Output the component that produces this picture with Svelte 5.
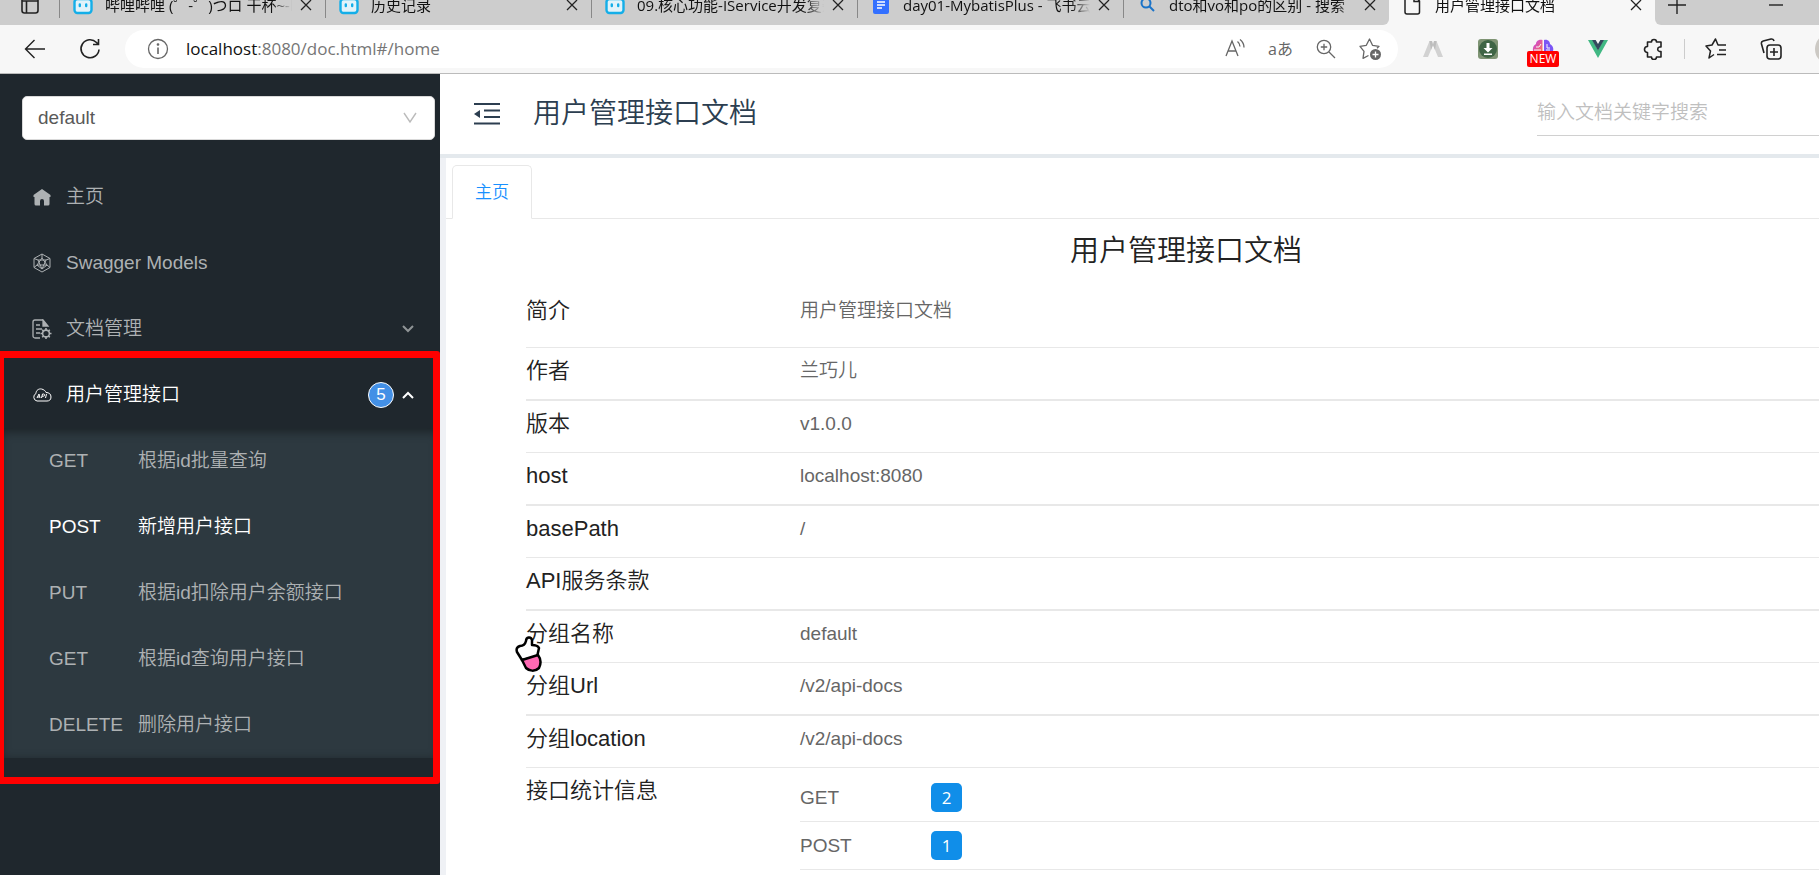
<script lang="ts">
    const tabs = [
        {icon: 'bili', title: '哔哩哔哩 (゜-゜)つロ 干杯~-bilibili'},
        {icon: 'bili', title: '历史记录'},
        {icon: 'bili', title: '09.核心功能-IService开发复杂业务'},
        {icon: 'doc', title: 'day01-MybatisPlus - 飞书云文档'},
        {icon: 'search', title: 'dto和vo和po的区别 - 搜索'},
        {icon: 'page', title: '用户管理接口文档', active: true},
    ];

    const apis = [
        {method: 'GET', name: '根据id批量查询'},
        {method: 'POST', name: '新增用户接口', active: true},
        {method: 'PUT', name: '根据id扣除用户余额接口'},
        {method: 'GET', name: '根据id查询用户接口'},
        {method: 'DELETE', name: '删除用户接口'},
    ];

    const info = [
        ['简介', '用户管理接口文档'],
        ['作者', '兰巧儿'],
        ['版本', 'v1.0.0'],
        ['host', 'localhost:8080'],
        ['basePath', '/'],
        ['API服务条款', ''],
        ['分组名称', 'default'],
        ['分组Url', '/v2/api-docs'],
        ['分组location', '/v2/api-docs'],
    ];

    const stats = [
        ['GET', 2],
        ['POST', 1],
    ];
</script>

<div class="window">
    <div class="tabbar">
        <button class="tab-menu" aria-label="Tab actions">
            <svg width="18" height="18" viewBox="0 0 18 18" fill="none" stroke="#222" stroke-width="1.6"><rect x="1" y="1" width="16" height="16" rx="2.5"/><path d="M1 5h16M5.500 5v12"/></svg>
        </button>
        {#each tabs as tab}
            <div class="tab" class:active={tab.active}>
                <span class="favicon">
                    {#if tab.icon === 'bili'}
                        <svg width="20" height="20" viewBox="0 0 20 20" fill="none" stroke="#14aee8" stroke-width="2.4" stroke-linecap="round"><path d="M5 1l2 3M15 1l-2 3"/><rect x="1.500" y="4" width="17" height="14" rx="3" fill="#e2f3fa"/><path d="M6.800 9.500v1.500M13.200 9.500v1.500"/></svg>
                    {:else if tab.icon === 'doc'}
                        <svg width="20" height="20" viewBox="0 0 20 20"><path d="M4 0h10l4 4v13a2 2 0 0 1-2 2H4a2 2 0 0 1-2-2V2a2 2 0 0 1 2-2z" fill="#3370ff"/><path d="M6 7h8M6 10h8M6 13h5" stroke="#fff" stroke-width="1.400"/></svg>
                    {:else if tab.icon === 'search'}
                        <svg width="20" height="20" viewBox="0 0 20 20" fill="none" stroke="#1a73c8" stroke-width="2"><circle cx="9" cy="8" r="4.500"/><path d="M12.500 11.500l4.500 4.500"/></svg>
                    {:else}
                        <svg width="20" height="20" viewBox="0 0 20 20" fill="none" stroke="#222" stroke-width="1.500"><path d="M4 1h7.500l5 5v11a2 2 0 0 1-2 2H4a2 2 0 0 1-2-2V3a2 2 0 0 1 2-2zM11 1v5.500h5.500"/></svg>
                    {/if}
                </span>
                <span class="tab-title">{tab.title}</span>
                <button class="close" aria-label="Close tab">
                    <svg width="12" height="12" viewBox="0 0 12 12" stroke="#222" stroke-width="1.300"><path d="M1 1l10 10M11 1L1 11"/></svg>
                </button>
            </div>
        {/each}
        <div class="tab-end">
            <button aria-label="New tab"><svg width="18" height="18" viewBox="0 0 18 18" stroke="#222" stroke-width="1.400"><path d="M0 9h18M9 0v18"/></svg></button>
            <button aria-label="Minimize"><svg width="14" height="14" viewBox="0 0 14 14" stroke="#222" stroke-width="1.400"><path d="M0 7h14"/></svg></button>
        </div>
    </div>

    <div class="toolbar">
        <button aria-label="Back"><svg width="22" height="22" viewBox="0 0 22 22" fill="none" stroke="#222" stroke-width="1.400"><path d="M21 11H2M10.500 2L1.500 11l9 9"/></svg></button>
        <button aria-label="Refresh"><svg width="22" height="22" viewBox="0 0 22 22" fill="none" stroke="#222" stroke-width="1.600"><path d="M20 11.500a9 9 0 1 1-2.500-7L19 6M19.500 1v5.500H14"/></svg></button>
        <div class="address">
            <svg width="22" height="22" viewBox="0 0 22 22" fill="none" stroke="#666" stroke-width="1.300"><circle cx="11" cy="11" r="9.500"/><path d="M11 9.500v6.500" stroke-width="1.600"/><circle cx="11" cy="6.500" r=".7" fill="#666"/></svg>
            <span class="url"><b>localhost</b>:8080/doc.html#/home</span>
            <button aria-label="Read aloud"><svg width="22" height="22" viewBox="0 0 22 22" fill="none" stroke="#666" stroke-width="1.300"><path d="M2 18L8 3l6 15M4 13h8M13.500 3.500c1.500 1.200 2.500 2.500 2.500 5M16 1.500c2.500 2 4 4 4 8"/></svg></button>
            <button class="translate" aria-label="Translate">aあ</button>
            <button aria-label="Zoom"><svg width="22" height="22" viewBox="0 0 22 22" fill="none" stroke="#666" stroke-width="1.300"><circle cx="9" cy="9" r="6.700"/><path d="M14 14l6 6M9 5.800v6.400M5.800 9h6.400"/></svg></button>
            <button aria-label="Add to favorites"><svg width="22" height="22" viewBox="0 0 22 22" fill="none" stroke="#666" stroke-width="1.300" stroke-linejoin="round"><path d="M9.500 17.500l-5.500 2.800 1-7L1 8.300l6.300-1L10.500 1l3 6.300 6.500 1-2 2"/><circle cx="16.500" cy="16.500" r="5.500" fill="#666" stroke="none"/><path d="M16.500 13.500v6M13.500 16.500h6" stroke="#fff"/></svg></button>
        </div>
        <div class="extensions">
            <button aria-label="Extension"><svg width="22" height="22" viewBox="0 0 22 22"><path d="M1 19L7.500 3h2.500l1 4-5 12zM21 19L14.500 3H12l-1 4 5 12z" fill="#d2d2d2"/><path d="M7.500 3H10l1 4-2 5zM14.500 3H12l-1 4 2 5z" fill="#bdbdbd"/></svg></button>
            <button aria-label="Download"><svg width="22" height="22" viewBox="0 0 22 22"><rect x="1" y="1" width="20" height="20" rx="3" fill="#7f9474"/><circle cx="11" cy="11" r="9" fill="#3f6545"/><path d="M9.500 5h3v5h3L11 14.500 6.500 10h3zM7 15.500h8V17H7z" fill="#fff"/></svg></button>
            <button class="brain" aria-label="Assistant">
                <svg width="22" height="22" viewBox="0 0 22 22">
                    <defs>
                        <linearGradient id="lobe" x2="1" y2="1"><stop offset="0" stop-color="#c13cf0"/><stop offset="1" stop-color="#ff7a4d"/></linearGradient>
                    </defs>
                    <path d="M10.500 2C6 1 4 4 4 6 0 8 0 14 3 15h7.500z" fill="url(#lobe)"/><path d="M12 2c4-1 6 2 6 4 4 2 4 7 2 9h-8z" fill="#7b55f5"/><path d="M4 9h3l2-3M18 10h-3V6M2 12h7M14 12h4" fill="none" stroke="#f7f7f7"/>
                </svg>
                <span>NEW</span>
            </button>
            <button aria-label="Vue devtools"><svg width="22" height="22" viewBox="0 0 22 22"><path d="M1 2h4.500L11 12l5.500-10H21L11 20z" fill="#41b883"/><path d="M5 2h3.700L11 6l2.300-4H17L11 12.500z" fill="#35495e"/></svg></button>
            <button aria-label="Extensions"><svg width="22" height="22" viewBox="0 0 22 22" fill="none" stroke="#222" stroke-width="1.600" stroke-linejoin="round"><path d="M5.500 4h4a2.500 2.500 0 0 1 5 0H19v5h-1.500a2.300 2.300 0 0 0 0 4.500H19V19h-4.500a2.500 2.500 0 0 1-5 0h-4v-4.500a2.700 2.700 0 0 1 0-6z"/></svg></button>
            <span class="divider"></span>
            <button aria-label="Favorites"><svg width="22" height="22" viewBox="0 0 22 22" fill="none" stroke="#222" stroke-width="1.500" stroke-linejoin="round"><path d="M9 16.500L4 20l1.500-7L1 8l6-1 3.500-6L13 7h8M14 12h7M12 16.500h9"/></svg></button>
            <button aria-label="Collections"><svg width="22" height="22" viewBox="0 0 22 22" fill="none" stroke="#222" stroke-width="1.600"><path d="M4 15L1.500 6a2.500 2.500 0 0 1 1.700-3L11 1a2.500 2.500 0 0 1 3 2"/><rect x="7" y="7" width="14" height="14" rx="3"/><path d="M14 10v8M10 14h8"/></svg></button>
            <span class="avatar"></span>
        </div>
    </div>

    <div class="app">
        <aside>
            <div class="select">
                <select aria-label="分组">
                    <option>default</option>
                </select>
                <svg width="14" height="12" viewBox="0 0 14 12" fill="none" stroke="#bbb" stroke-width="1.400"><path d="M1 1l6 9 6-9"/></svg>
            </div>
            <nav>
                <a class="item" href="#/home">
                    <svg width="18" height="18" viewBox="0 0 18 18"><path d="M9 1L.5 7v2H1.500v7A1.500 1.500 0 0 0 3 17.500h4V13a2 2 0 0 1 4 0v4.500h4a1.500 1.500 0 0 0 1.500-1.500V9h1V7z" fill="currentColor"/></svg>
                    <span>主页</span>
                </a>
                <a class="item" href="#/models">
                    <svg width="18" height="20" viewBox="0 0 18 20" fill="none" stroke="currentColor" stroke-width="1"><path d="M9 1l8 4.500v9L9 19l-8-4.500v-9zM9 1v4M17 5.500l-4 1.500M1 5.500L5 7M1 14.500L4 12M17 14.500L14 12M9 5l5 7H4zM5 7h8M5 7l4 9 4-9M4 12l5 4 5-4"/></svg>
                    <span>Swagger Models</span>
                </a>
                <a class="item" href="#/docs">
                    <svg width="20" height="20" viewBox="0 0 20 20" fill="none" stroke="currentColor" stroke-width="1.300"><path d="M8 19H3a2 2 0 0 1-2-2V3a2 2 0 0 1 2-2h8M4 6h4M4 10h6M4 14h4"/><path d="M11 1l5 6h-5z" fill="currentColor"/><circle cx="14" cy="14.500" r="3.400" stroke-width="1.600"/><path d="M14 9v2M14 18v2M8.500 14.500h2M17.500 14.500h2M10.200 10.700l1.400 1.400M16.400 16.900l1.400 1.400M10.200 18.300l1.400-1.400M16.400 12.100l1.400-1.400" stroke-width="1.600"/></svg>
                    <span>文档管理</span>
                    <svg class="arrow dim" width="12" height="8" viewBox="0 0 12 8" fill="none" stroke="currentColor" stroke-width="2"><path d="M1 1l5 5 5-5"/></svg>
                </a>
                <div class="group">
                    <a class="item open" href="#/user">
                        <svg width="20" height="14" viewBox="0 0 20 14" fill="none" stroke="currentColor" stroke-width="1"><path d="M5 13a4 4 0 0 1-1-7.500C4 2 7 .5 9.500 1s4 2 4.500 3.500c3 0 5 1.500 5 4.500s-2 4-4 4z"/><path d="M5 10l2-4 1 4M5.500 9h2M9.500 10l1-4h1.200a1 1 0 0 1-.4 2.200H10M13.500 10l1-4"/></svg>
                        <span>用户管理接口</span>
                        <span class="count">5</span>
                        <svg class="arrow" width="12" height="8" viewBox="0 0 12 8" fill="none" stroke="currentColor" stroke-width="2"><path d="M1 7l5-5 5 5"/></svg>
                    </a>
                    <div class="submenu">
                        {#each apis as api}
                            <a href="#/api" class:active={api.active}><span class="method">{api.method}</span><span>{api.name}</span></a>
                        {/each}
                    </div>
                    <div class="highlight"></div>
                </div>
            </nav>
        </aside>

        <section>
            <header>
                <button aria-label="Toggle menu">
                    <svg width="26" height="24" viewBox="0 0 26 24" stroke="#2c3e50" stroke-width="2"><path d="M0 2h26M10 8.500h16M10 15h16M0 21.500h26"/><path d="M0 12l6-4v8z" fill="#2c3e50" stroke="none"/></svg>
                </button>
                <h1>用户管理接口文档</h1>
                <input type="text" placeholder="输入文档关键字搜索" aria-label="搜索">
            </header>
            <main>
                <div class="page-tabs"><button>主页</button></div>
                <div class="doc">
                    <h2>用户管理接口文档</h2>
                    <table class="info">
                        <tbody>
                            {#each info as [label, value]}
                                <tr>
                                    <th scope="row">{label}</th>
                                    <td>{value}</td>
                                </tr>
                            {/each}
                            <tr class="last">
                                <th scope="row">接口统计信息</th>
                                <td class="nested">
                                    <table class="stats">
                                        <tbody>
                                            {#each stats as [method, count]}
                                                <tr>
                                                    <th scope="row">{method}</th>
                                                    <td><span class="tag">{count}</span></td>
                                                </tr>
                                            {/each}
                                        </tbody>
                                    </table>
                                </td>
                            </tr>
                        </tbody>
                    </table>
                    <svg class="cursor" width="28" height="38" viewBox="0 0 28 38" stroke="#000" stroke-width="2.500" stroke-linejoin="round"><path d="M7 25L2 17c-1-3 0-5 3-6 3 0 5-1 6-5 0-4 5-5 6-1v5c3 0 6 1 7 3l-2 9z" fill="#fff"/><path d="M7 25l16-5c3 4 3 9 1 13-4 4-10 3-13 0z" fill="#ff69b4"/></svg>
                </div>
            </main>
        </section>
    </div>
</div>

<style>
    :global(body) {
        margin: 0;
    }

    .window {
        height: 100vh;
        display: flex;
        flex-direction: column;
        overflow: hidden;
        font-family: "Liberation Sans", "Noto Sans CJK SC", sans-serif;
        font-size: 19px;
        font-weight: 350;
        color: #222;
    }

    button {
        display: flex;
        align-items: center;
        justify-content: center;
        padding: 0;
        border: 0;
        background: none;
        font: inherit;
        color: inherit;
    }

    a {
        text-decoration: none;
        color: inherit;
    }

    svg {
        flex: none;
    }

    /* browser chrome */
    .tabbar {
        height: 25px;
        flex: none;
        display: flex;
        align-items: flex-end;
        overflow: hidden;
        background: #f7f7f7;
        font: 15px "Open Sans", "Noto Sans CJK SC", sans-serif;
        color: #111;
    }

    .tab-menu {
        width: 59px;
        height: 40px;
        background: #cdcdcd;
    }

    .tab {
        flex: 0 1 266px;
        min-width: 0;
        height: 40px;
        box-sizing: border-box;
        padding: 0 13px 0 14px;
        display: flex;
        align-items: center;
        background: linear-gradient(#888, #888) 0 0 / 1px 33px no-repeat #cdcdcd;
    }

    .tab.active {
        background: #f7f7f7;
    }

    .tab:has(+ .active) {
        border-bottom-right-radius: 6px;
    }

    .favicon {
        display: flex;
        margin-right: 12px;
    }

    .tab-title {
        flex: 1;
        min-width: 0;
        overflow: hidden;
        white-space: nowrap;
        margin-right: 8px;
        padding-bottom: 2px;
        mask-image: linear-gradient(to right, #000 90%, transparent);
    }

    .tab-end {
        flex: 1;
        height: 40px;
        display: flex;
        align-items: center;
        justify-content: space-between;
        padding: 0 36px 0 13px;
        background: #cdcdcd;
        border-bottom-left-radius: 6px;
    }

    .toolbar {
        height: 48px;
        flex: none;
        display: flex;
        align-items: center;
        padding-left: 24px;
        background: #f7f7f7;
        border-bottom: 1px solid #bbb;
    }

    .toolbar > button {
        margin-right: 33px;
    }

    .toolbar > button + button {
        margin-right: 24px;
    }

    .address {
        flex: 1;
        height: 38px;
        box-sizing: border-box;
        display: flex;
        align-items: center;
        gap: 22px;
        padding: 0 17px 0 22px;
        border-radius: 19px;
        background: #fff;
    }

    .url {
        flex: 1;
        margin-left: -5px;
        padding-bottom: 2px;
        font: 17px "Open Sans", sans-serif;
        color: #767676;
    }

    .url b {
        font-weight: 400;
        color: #111;
    }

    .translate {
        font: 16px "Open Sans", "Noto Sans CJK JP", sans-serif;
        padding-bottom: 3px;
        color: #666;
    }

    .extensions {
        display: flex;
        align-items: center;
        gap: 33px;
        padding-left: 24px;
    }

    .brain {
        position: relative;
    }

    .brain span {
        position: absolute;
        top: 13px;
        left: -5px;
        width: 32px;
        border-radius: 2px;
        background: #f00;
        color: #fff;
        font: 12px/16px "Open Sans", sans-serif;
        text-align: center;
    }

    .divider {
        width: 1px;
        height: 20px;
        margin: 0 -13px;
        background: #ccc;
    }

    .avatar {
        width: 32px;
        height: 32px;
        margin-right: -28px;
        border-radius: 50%;
        background: #ccc9c4;
    }

    .app {
        flex: 1;
        min-height: 0;
        display: flex;
    }

    /* side menu */
    aside {
        width: 440px;
        flex: none;
        overflow: hidden;
        background: #1f272d;
        color: #adb1b3;
    }

    .select {
        position: relative;
        margin: 22px 5px 24px 22px;
    }

    .select select {
        display: block;
        width: 100%;
        height: 44px;
        padding: 0 15px 2px;
        appearance: none;
        border: 1px solid #d9d9d9;
        border-radius: 5px;
        background: #fff;
        font: inherit;
        color: #595959;
    }

    .select svg {
        position: absolute;
        right: 18px;
        top: 16px;
    }

    .item {
        height: 66px;
        padding: 0 26px 0 32px;
        display: flex;
        align-items: center;
    }

    .item span:not(.count) {
        line-height: 66px;
    }

    .item svg:first-child {
        width: 20px;
        margin-right: 14px;
    }

    .arrow {
        margin-left: auto;
    }

    .dim {
        color: #8f9496;
    }

    .open {
        color: #fff;
    }

    .count {
        width: 24px;
        height: 24px;
        margin-left: auto;
        margin-right: 8px;
        border: 1px solid #fff;
        border-radius: 50%;
        background: #4390e6;
        font-size: 17px;
        line-height: 24px;
        text-align: center;
    }

    .count + .arrow {
        margin-left: 0;
    }

    .group {
        position: relative;
    }

    .submenu {
        background: #2d3940;
        box-shadow: inset 0 3px 11px rgba(0, 0, 0, 0.45);
    }

    .submenu a {
        display: flex;
        align-items: baseline;
        height: 66px;
        line-height: 66px;
        padding-left: 49px;
    }

    .submenu .active {
        color: #fff;
    }

    .method {
        width: 89px;
    }

    .highlight {
        position: absolute;
        inset: -11px 0 -26px -3px;
        border: 7px solid #f00;
        border-radius: 3px;
        pointer-events: none;
    }

    /* content */
    section {
        flex: 1;
        min-width: 0;
        display: flex;
        flex-direction: column;
        background: #eff1f5;
    }

    header {
        height: 80px;
        flex: none;
        display: flex;
        align-items: center;
        padding-left: 34px;
        background: #fff;
        border-bottom: 4px solid #e4e9ed;
    }

    h1, h2 {
        margin: 0;
        font-weight: inherit;
    }

    h1 {
        margin-left: 33px;
        font-size: 28px;
        line-height: 40px;
        color: #2c3e50;
    }

    header input {
        width: 282px;
        height: 44px;
        box-sizing: border-box;
        margin-left: auto;
        padding: 0 0 2px;
        border: 0;
        border-bottom: 1px solid #d0d0d0;
        outline: none;
        font: inherit;
    }

    header input::placeholder {
        color: #bfbfbf;
    }

    main {
        flex: 1;
        min-height: 0;
        margin-left: 6px;
        padding-top: 7px;
        overflow: hidden;
        background: #fff;
    }

    .page-tabs {
        display: flex;
        padding-left: 6px;
        border-bottom: 1px solid #e8e8e8;
    }

    .page-tabs button {
        height: 54px;
        margin-bottom: -1px;
        padding: 0 22px 3px;
        border: 1px solid #e8e8e8;
        border-bottom-color: #fff;
        border-radius: 5px 5px 0 0;
        background: #fff;
        font-size: 17px;
        color: #1890ff;
    }

    /* the sheet runs on past the right edge of the window */
    .doc {
        position: relative;
        margin-right: -107px;
        padding: 12px 80px 0;
    }

    h2 {
        font-size: 29px;
        line-height: 40px;
        text-align: center;
    }

    table {
        width: 100%;
        border-collapse: separate;
        border-spacing: 0;
    }

    th, td {
        padding: 0;
        text-align: left;
        vertical-align: top;
        font-weight: inherit;
    }

    .info {
        margin-top: 17px;
        table-layout: fixed;
    }

    .info > tbody > tr > th {
        width: 274px;
        padding: 6px 0 11px;
        font-size: 22px;
        line-height: 34px;
        border-bottom: 1px solid #e8e8e8;
    }

    .info > tbody > tr > td {
        padding: 6px 0 11px;
        line-height: 34px;
        color: #666;
        border-bottom: 1px solid #e8e8e8;
    }

    .info > tbody > tr:nth-child(even) > * {
        border-bottom-width: 2px;
    }

    .info > tbody > tr:first-child > * {
        padding-bottom: 19px;
    }

    .info > tbody > tr.last > * {
        border-bottom: 0;
    }

    .info > tbody > tr > .nested {
        padding: 6px 0 0;
    }

    .stats th, .stats td {
        height: 47px;
        vertical-align: middle;
        border-bottom: 1px solid #e8e8e8;
    }

    .stats th {
        width: 131px;
    }

    .tag {
        display: block;
        width: 31px;
        border-radius: 5px;
        background: #108ee9;
        font: 17px/29px "Open Sans", sans-serif;
        color: #fff;
        text-align: center;
    }

    .cursor {
        position: absolute;
        left: 69px;
        top: 416px;
    }
</style>
